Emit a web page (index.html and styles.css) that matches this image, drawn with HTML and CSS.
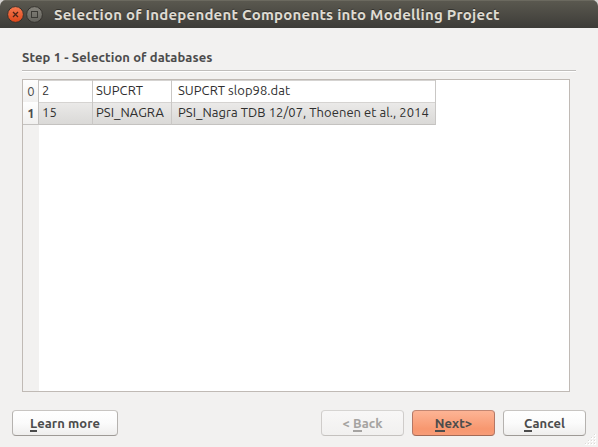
FILE: index.html
```
<!DOCTYPE html>
<html lang="en">
<head>
<meta charset="utf-8">
<title>Selection of Independent Components into Modelling Project</title>
<link rel="stylesheet" href="styles.css">
</head>
<body>
<div class="window">
  <header class="titlebar">
    <svg class="controls" width="38" height="18" viewBox="0 0 38 18">
      <defs>
        <linearGradient id="close" x1="0" y1="0" x2="0" y2="1"><stop offset="0" stop-color="#f67a50"/><stop offset="1" stop-color="#dd4619"/></linearGradient>
        <linearGradient id="max" x1="0" y1="0" x2="0" y2="1"><stop offset="0" stop-color="#85837b"/><stop offset="1" stop-color="#63625c"/></linearGradient>
      </defs>
      <circle cx="9.5" cy="9.5" r="7.9" fill="url(#close)" stroke="#35332e"/>
      <path d="M7 7l5 5M12 7l-5 5" stroke="#4b2417" stroke-width="1.3"/>
      <circle cx="28.5" cy="9.5" r="7.9" fill="url(#max)" stroke="#35332e"/>
      <rect x="25.5" y="6.5" width="6" height="6" fill="none" stroke="#3b3a35"/>
    </svg>
    <h1 class="title">Selection of Independent Components into Modelling Project</h1>
  </header>
  <main class="content">
    <h2 class="step">Step 1 - Selection of databases</h2>
    <div class="table-view">
      <div class="row">
        <div class="head">0</div>
        <div class="cell id">2</div>
        <div class="cell name">SUPCRT</div>
        <div class="cell desc">SUPCRT slop98.dat</div>
      </div>
      <div class="row selected">
        <div class="head">1</div>
        <div class="cell id">15</div>
        <div class="cell name">PSI_NAGRA</div>
        <div class="cell desc">PSI_Nagra TDB 12/07, Thoenen et al., 2014</div>
      </div>
    </div>
  </main>
  <footer class="buttons">
    <button class="btn learn"><span class="key">L</span>earn more</button>
    <button class="btn back" disabled>&lt; <span class="key">B</span>ack</button>
    <button class="btn next"><span class="key">N</span>ext&gt;</button>
    <button class="btn cancel"><span class="key">C</span>ancel</button>
  </footer>
  <svg class="grip" width="11" height="11" viewBox="0 0 11 11">
    <path fill="#fff" d="M9 0h2v2h-2zM6 3h2v2h-2zM9 3h2v2h-2zM3 6h2v2h-2zM6 6h2v2h-2zM9 6h2v2h-2zM0 9h2v2h-2zM3 9h2v2h-2zM6 9h2v2h-2zM9 9h2v2h-2z"/>
    <path fill="#dcd9d6" d="M9 0h1v1h-1zM6 3h1v1h-1zM9 3h1v1h-1zM3 6h1v1h-1zM6 6h1v1h-1zM9 6h1v1h-1zM0 9h1v1h-1zM3 9h1v1h-1zM6 9h1v1h-1zM9 9h1v1h-1z"/>
  </svg>
</div>
</body>
</html>
```
FILE: styles.css
```
* { box-sizing: border-box; }
body { margin: 0; background: #d4d2d0; }
.window {
  position: relative;
  width: 598px;
  height: 447px;
  display: flex;
  flex-direction: column;
  background: #f2f1f0;
  border-radius: 6px 6px 0 0;
  overflow: hidden;
  font: 13px/18px Ubuntu, "Noto Sans", sans-serif;
  color: #2f2f2f;
}
.titlebar {
  height: 28px;
  flex: none;
  display: flex;
  align-items: center;
  padding-left: 6px;
  background: linear-gradient(#5b5950, #3d3c38);
  box-shadow: inset 0 1px #6b695f;
}
.title {
  margin: 2px 0 0 10px;
  font-size: 15px;
  line-height: 20px;
  font-weight: 700;
  letter-spacing: 0.23px;
  color: #dfdbd2;
  text-shadow: 0 -1px #33322e;
  white-space: nowrap;
}
.content {
  flex: 1;
  display: flex;
  flex-direction: column;
  padding: 20px 22px 0;
}
.step {
  margin: 0;
  height: 23px;
  font-size: 13px;
  line-height: 18px;
  font-weight: 700;
  letter-spacing: 0.1px;
  color: #4c4c4c;
  border-bottom: 1px solid #c0bebc;
  box-shadow: 0 1px #fff;
  white-space: nowrap;
}
.table-view {
  width: 548px;
  height: 313px;
  margin-top: 8px;
  border: 1px solid #c0bab5;
  background: linear-gradient(90deg, #f2f1f0 16px, #fff 16px);
}
.row {
  display: grid;
  grid-template-columns: 16px 54px 79px 264px;
  height: 22px;
  line-height: 20px;
}
.row > div {
  border-bottom: 1px solid #c4c2c0;
  white-space: nowrap;
}
.cell {
  border-right: 1px solid #c9c7c5;
  padding-left: 3px;
  box-shadow: inset 0 1px #d5d3d1;
  letter-spacing: 0.05px;
}
.desc { padding-left: 6px; }
.head {
  background: linear-gradient(#fefefe, #f1f0ef);
  border-right: 1px solid #c4c2c0;
  padding-left: 1px;
  text-align: center;
  color: #4c4c4c;
  line-height: 22px;
}
.selected .cell { background: linear-gradient(#ebeae9, #dad9d7); }
.selected .head { font-weight: 700; }
.buttons {
  height: 37px;
  flex: none;
  display: flex;
  gap: 8px;
  padding: 0 12px;
}
.btn {
  width: 83px;
  height: 26px;
  padding: 0;
  border: 1px solid;
  border-color: #c8c5c2 #b5b2af #9e9a96;
  border-radius: 4px;
  background: linear-gradient(#fff, #fbfbfb 50%, #efeeed);
  font: 700 13px/20px Ubuntu, "Noto Sans", sans-serif;
  letter-spacing: 0.05px;
  color: #4c4c4c;
  white-space: nowrap;
}
.learn { width: 106px; margin-right: auto; }
.back { color: #a5a3a1; border-color: #d6d4d2 #cfccca #c4c1be; background: linear-gradient(#f8f7f7, #f1f0ef); }
.next { border-color: #c28672 #b37765 #a36a56; background: linear-gradient(#fdb495, #f7976f 75%, #f79c78); }
.key { display: inline-block; height: 19px; border-bottom: 2px solid currentColor; }
.grip { position: absolute; right: 2px; bottom: 2px; }
```
